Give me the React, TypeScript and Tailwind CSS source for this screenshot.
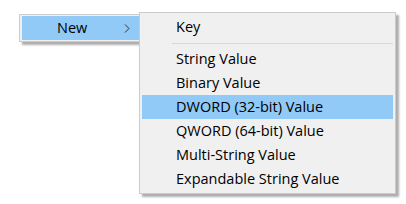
const items = [
  'String Value',
  'Binary Value',
  'DWORD (32-bit) Value',
  'QWORD (64-bit) Value',
  'Multi-String Value',
  'Expandable String Value',
];

function Chevron() {
  return (
    <svg width="6" height="9" viewBox="0 0 6 9" className="text-[#333]">
      <path d="M1 0.5 L5 4.5 L1 8.5" fill="none" stroke="currentColor" strokeWidth="1" />
    </svg>
  );
}

export default function App() {
  return (
    <div
      className="w-[406px] h-[204px] bg-white text-[14.5px] text-black"
      style={{ fontFamily: '"Open Sans", "Noto Sans", sans-serif' }}
    >
      <div className="flex items-start pt-[12px] pl-[19px]">
        {/* parent menu item */}
        <div className="mt-[2px] w-[121px] h-[28px] border border-r-0 border-[#cccccc] bg-[#f0f0f0] pl-[2px] py-[1px] shadow-[3px_3px_2px_rgba(0,0,0,0.32)]">
          <div className="h-full bg-[#91c9f7] flex items-center pl-[35px] pr-[10px]">
            <span className="flex-1 leading-none">New</span>
            <Chevron />
          </div>
        </div>

        {/* submenu */}
        <div className="-ml-[1px] w-[257px] h-[182px] border border-[#cccccc] bg-[#f0f0f0] p-[2px] shadow-[3px_3px_2px_rgba(0,0,0,0.32)]">
          <div className="h-[24px] flex items-center pl-[34px]">Key</div>
          <div className="h-[8px] flex items-center pl-[30px]">
            <div className="h-px w-full bg-[#d7d7d7]" />
          </div>
          {items.map((label) => (
            <div
              key={label}
              className={
                label === 'DWORD (32-bit) Value'
                  ? 'h-[24px] flex items-center pl-[34px] bg-[#91c9f7]'
                  : 'h-[24px] flex items-center pl-[34px]'
              }
            >
              {label}
            </div>
          ))}
        </div>
      </div>
    </div>
  );
}
